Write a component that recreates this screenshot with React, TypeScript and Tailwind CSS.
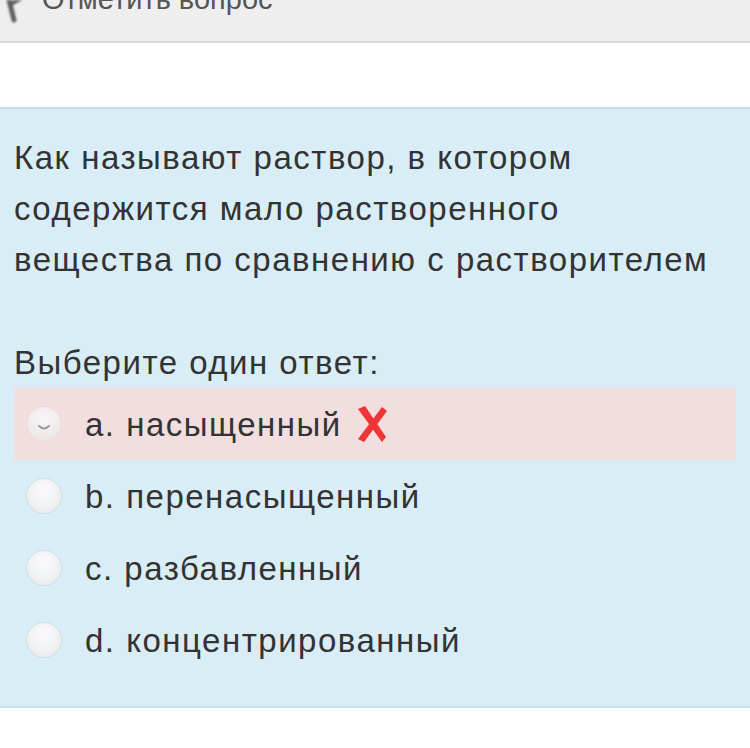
const options = [
  { key: "a", label: "а. насыщенный", checked: true, wrong: true },
  { key: "b", label: "b. перенасыщенный" },
  { key: "c", label: "c. разбавленный" },
  { key: "d", label: "d. концентрированный" },
];

const questionLines = [
  "Как называют раствор, в котором",
  "содержится мало растворенного",
  "вещества по сравнению с растворителем",
];

function Radio({ checked }: { checked?: boolean }) {
  return (
    <span
      className={
        checked
          ? "relative flex h-[36px] w-[36px] shrink-0 items-center justify-center rounded-full border border-[#e6dcdd] bg-[radial-gradient(circle_at_50%_35%,#faf6f6_0%,#efe9ea_65%,#e6dfe0_100%)]"
          : "relative flex h-[36px] w-[36px] shrink-0 items-center justify-center rounded-full border border-[#d6dde2] bg-[radial-gradient(circle_at_50%_35%,#fbfbfc_0%,#eef0f2_60%,#e2e5e8_100%)]"
      }
    >
      {checked && (
        <svg width="16" height="10" viewBox="0 0 16 10" className="mt-[8px]">
          <path d="M3 3 Q8 8 13 3" stroke="#a09a9b" strokeWidth="2" fill="none" strokeLinecap="round" />
        </svg>
      )}
    </span>
  );
}

function RedCross() {
  return (
    <svg width="32" height="38" viewBox="0 0 32 38" className="ml-[14px]">
      <path d="M2 4 L9 1 L30 32 L26 37 Z" fill="#ef3535" />
      <path d="M26 2 L31 6 L8 37 L2 34 Z" fill="#ef3535" />
    </svg>
  );
}

export default function App() {
  return (
    <div className="h-[748px] w-[750px] overflow-hidden bg-white font-['Liberation_Sans',Arial,sans-serif] text-[#333]">
      <div className="flex h-[43px] items-start border-b-2 border-[#dadada] bg-[#eeeeee]">
        <svg width="30" height="24" viewBox="0 0 30 24" className="ml-[2px] blur-[0.8px]">
          <path d="M7 0 L12 20" stroke="#5f5f5f" strokeWidth="5" strokeLinecap="round" />
          <path d="M7 5 Q14 1 20 -2" stroke="#5f5f5f" strokeWidth="4" fill="none" />
        </svg>
        <span className="ml-[10px] mt-[-16px] text-[29px] leading-[30px] text-[#555]">Отметить вопрос</span>
      </div>

      <div className="mt-[64px] border-y-2 border-[#c2e3ea] bg-[#d9edf7] px-[14px] pb-[30px] pt-[23px] text-[33px] tracking-[1.5px]">
        <div className="leading-[51px]">
          {questionLines.map((l) => (
            <p key={l} className="whitespace-nowrap">{l}</p>
          ))}
        </div>
        <p className="mt-[52px] leading-[51px]">Выберите один ответ:</p>
        <div className="flex flex-col">
          {options.map((o) => (
            <div
              key={o.key}
              className={
                o.wrong
                  ? "flex h-[72px] items-center bg-[#f2dede] pl-[12px]"
                  : "flex h-[72px] items-center pl-[12px]"
              }
            >
              <Radio checked={o.checked} />
              <span className="ml-[23px] leading-none">{o.label}</span>
              {o.wrong && <RedCross />}
            </div>
          ))}
        </div>
      </div>
    </div>
  );
}
